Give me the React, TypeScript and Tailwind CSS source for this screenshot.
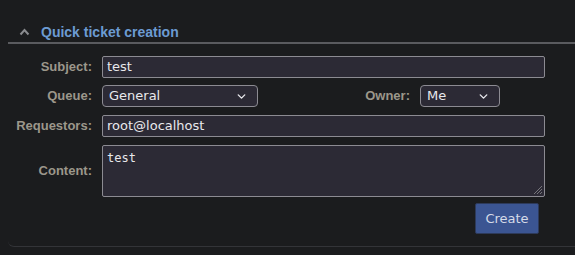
import { ChevronDown } from "lucide-react";

function Label({ children }: { children: React.ReactNode }) {
  return (
    <div className="w-[84px] shrink-0 text-right font-['Liberation_Sans',sans-serif] text-[13px] font-bold text-[#9c978b]">
      {children}
    </div>
  );
}

function Select({ value, width }: { value: string; width: string }) {
  return (
    <div
      className={`${width} flex h-[22px] items-center justify-between rounded-[4px] border border-[#8c8b92] bg-[#2c2a35] pl-[6px] pr-[9px] text-[13px] text-[#e8e8ec]`}
    >
      <span>{value}</span>
      <ChevronDown className="h-[13px] w-[13px] text-[#e8e8ec]" strokeWidth={2.6} />
    </div>
  );
}

export default function App() {
  return (
    <main className="h-[255px] w-[575px] overflow-hidden bg-[#1b1c1e] pt-[24px] font-['DejaVu_Sans',sans-serif]">
      <section className="ml-[8px] rounded-bl-[6px] border-b border-[#333438] pb-[12px]">
        <div className="flex h-[20px] items-center border-b-2 border-[#5a5b5f] pb-[2px]">
          <svg className="ml-[11px] h-[8px] w-[11px]" viewBox="0 0 11 8" fill="none">
            <path d="M1.5 6.5 L5.5 2 L9.5 6.5" stroke="#8a8b8f" strokeWidth="2" />
          </svg>
          <h2 className="ml-[11px] font-['Liberation_Sans',sans-serif] text-[14px] font-bold text-[#6c9bd2]">
            Quick ticket creation
          </h2>
        </div>

        <div className="mt-[12px] flex flex-col">
          <div className="flex items-center">
            <Label>Subject:</Label>
            <div className="ml-[10px] flex h-[22px] w-[443px] items-center rounded-[2px] border border-[#8c8b92] bg-[#2c2a35] px-[4px] text-[13px] text-[#e8e8ec]">
              test
            </div>
          </div>

          <div className="mt-[7px] flex items-center">
            <Label>Queue:</Label>
            <div className="ml-[10px]">
              <Select value="General" width="w-[156px]" />
            </div>
            <div className="ml-[100px] w-[52px] text-right font-['Liberation_Sans',sans-serif] text-[13px] font-bold text-[#9c978b]">
              Owner:
            </div>
            <div className="ml-[10px]">
              <Select value="Me" width="w-[80px]" />
            </div>
          </div>

          <div className="mt-[8px] flex items-center">
            <Label>Requestors:</Label>
            <div className="ml-[10px] flex h-[22px] w-[443px] items-center rounded-[2px] border border-[#8c8b92] bg-[#2c2a35] px-[4px] text-[13px] text-[#e8e8ec]">
              root@localhost
            </div>
          </div>

          <div className="mt-[8px] flex items-center">
            <Label>Content:</Label>
            <div className="relative ml-[10px] h-[52px] w-[443px] rounded-[2px] border border-[#8c8b92] bg-[#2c2a35] px-[4px] pt-[3px] font-['DejaVu_Sans_Mono',monospace] text-[12px] text-[#e8e8ec]">
              test
              <svg className="absolute bottom-[1px] right-[1px] h-[10px] w-[10px]" viewBox="0 0 10 10">
                <path d="M9 1 L1 9 M9 4 L4 9 M9 7 L7 9" stroke="#77767c" strokeWidth="1" />
              </svg>
            </div>
          </div>

          <div className="mt-[6px] flex justify-end pr-[36px]">
            <button className="h-[31px] w-[64px] rounded-[2px] border border-[#2d3a5a] bg-[#3b5592] text-[13px] text-[#d5dbe8]">
              Create
            </button>
          </div>
        </div>
      </section>
    </main>
  );
}
